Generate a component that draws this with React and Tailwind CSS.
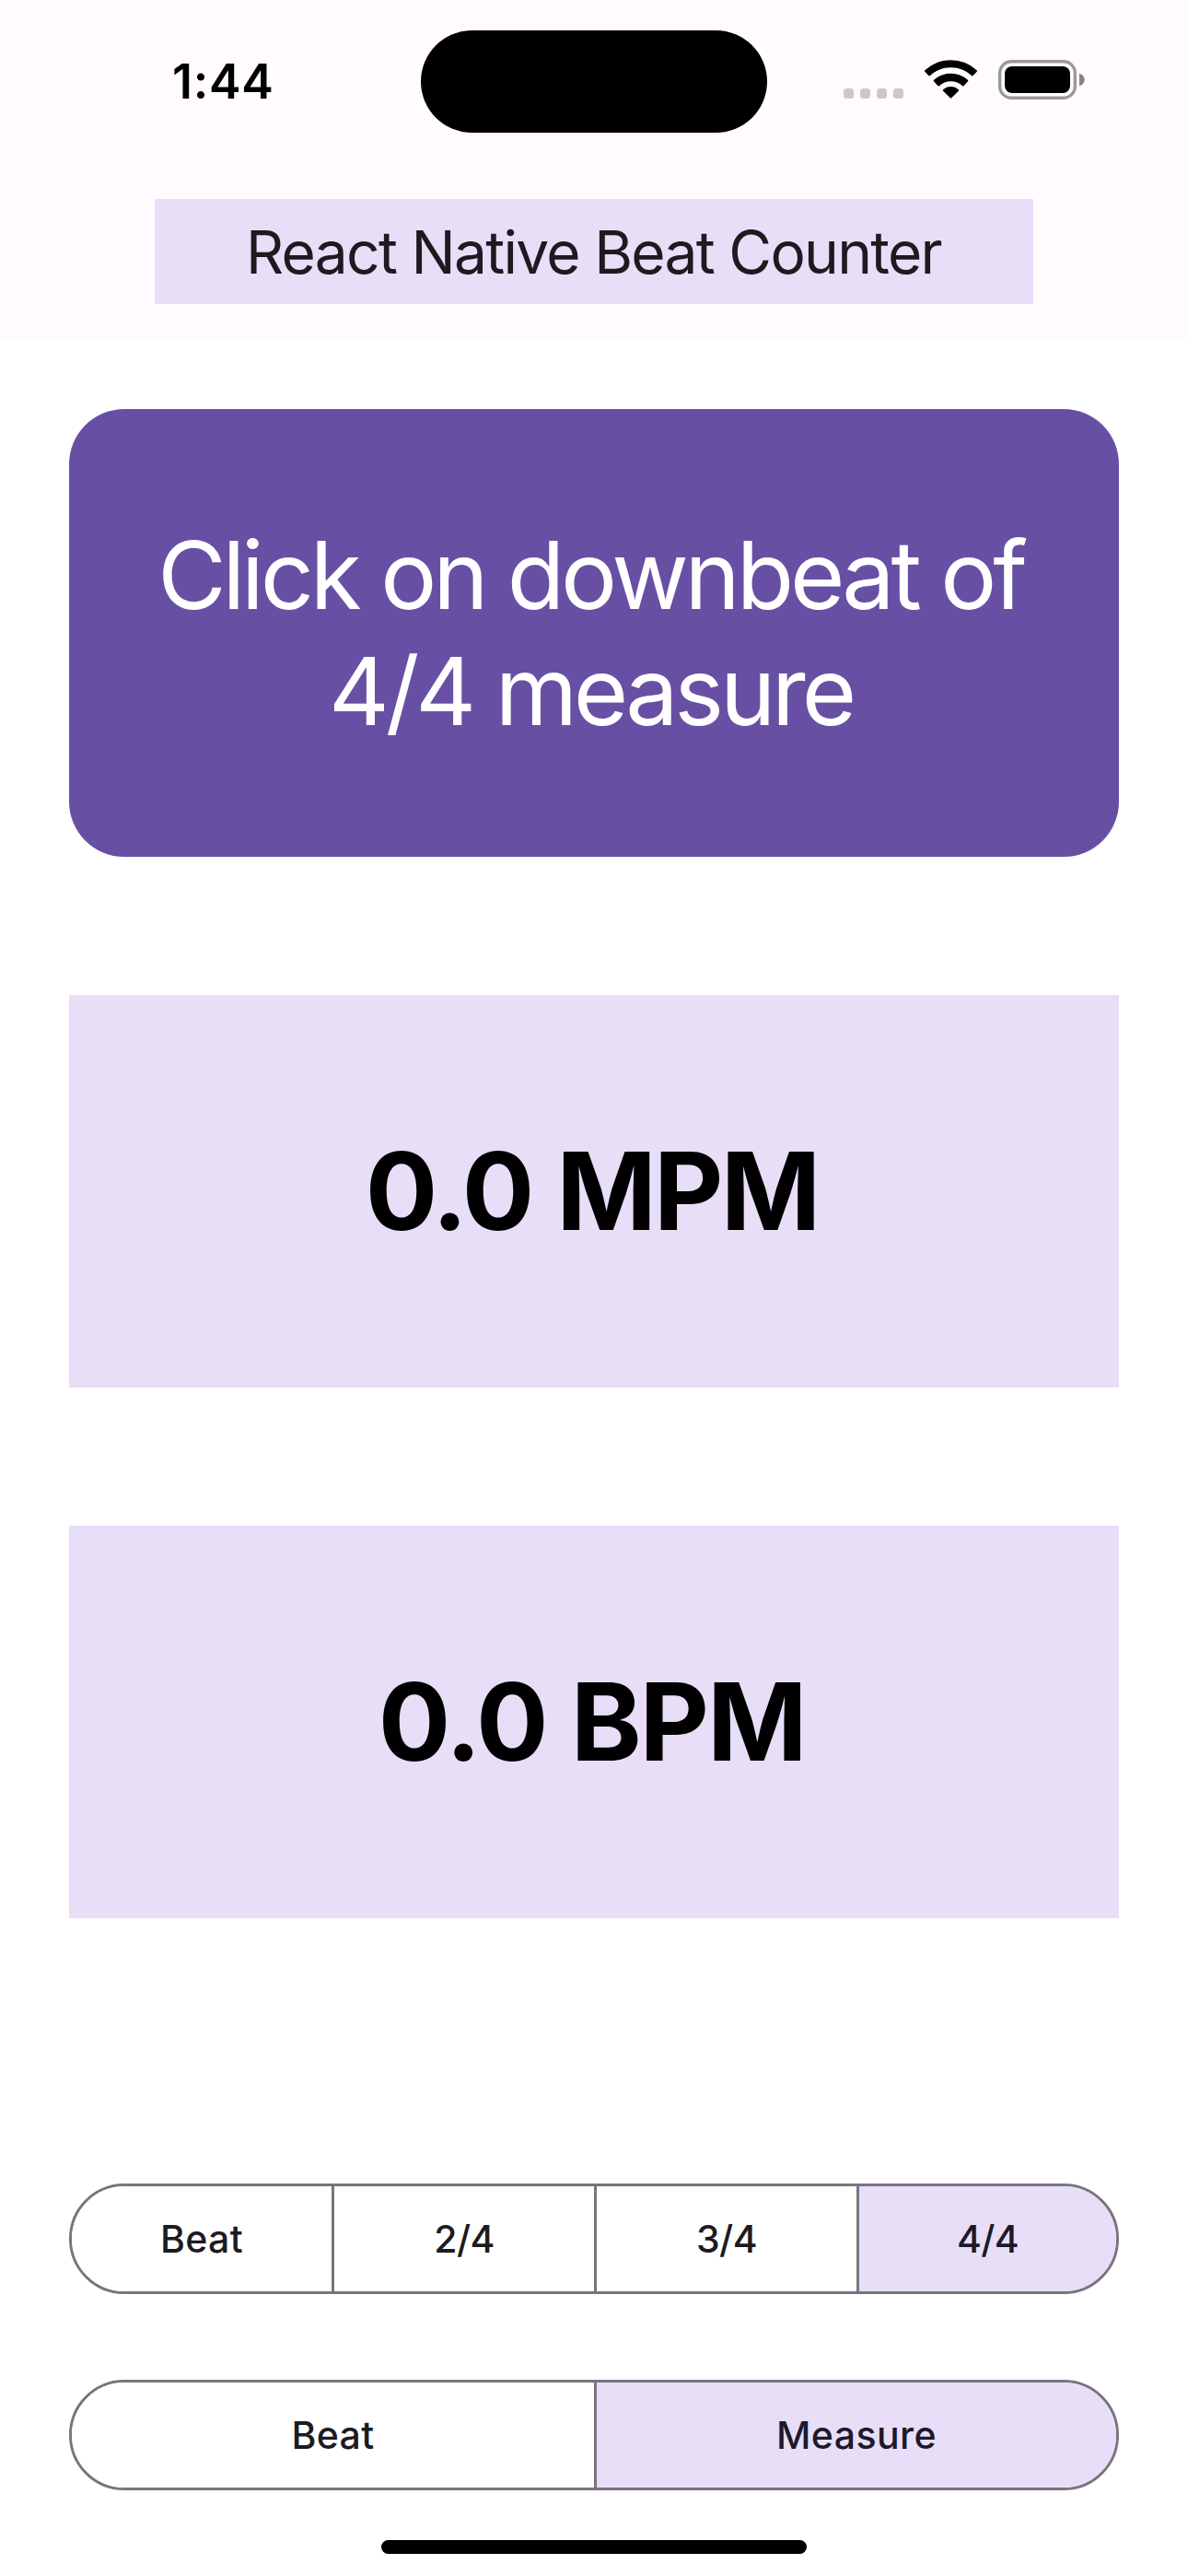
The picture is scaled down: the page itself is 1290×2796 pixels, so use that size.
function StatusBar() {
  return (
    <div className="grid h-[177px] grid-cols-[457px_376px_1fr] items-start text-black">
      <div className="pt-[57px] pl-[187px] text-[52px] leading-[63px] font-semibold tracking-[0.7px]">
        1:44
      </div>
      <div className="mt-[33.33px] h-[110.67px] rounded-full bg-black" />
      <div className="flex items-start pt-[65px] pl-[83px]">
        <div className="mt-[31px] flex gap-[7px]">
          {[0, 1, 2, 3].map((dot) => (
            <span key={dot} className="size-[11px] rounded-[3.5px] bg-[#cac8ca]" />
          ))}
        </div>
        <svg
          className="ml-[23px] h-[42px] w-[57px]"
          viewBox="0 0 171 126"
          fill="currentColor"
          stroke="currentColor"
          strokeWidth="6"
          strokeLinejoin="round"
        >
          <path d="M3 36.1A122 122 0 0 1 168 36.1L155.8 49.3A104 104 0 0 0 15.2 49.3Z" />
          <path d="M32.2 67.7A79 79 0 0 1 138.8 67.7L125.3 82.5A59 59 0 0 0 45.7 82.5Z" />
          <path d="M85.5 122L62.5 99A33 33 0 0 1 108.5 99Z" />
        </svg>
        <svg className="ml-[23px] h-[43px] w-[94px]" viewBox="0 0 94 43">
          <rect x="1.7" y="1.7" width="81.6" height="39.6" rx="12.5" fill="white" stroke="#9a989a" strokeWidth="3.4" />
          <rect x="7" y="7" width="71" height="29" rx="8" fill="black" />
          <path d="M88 14.7C91.500 15.800 93.700 18.500 93.700 21.500C93.700 24.500 91.500 27.200 88 28.300Z" fill="#858385" />
        </svg>
      </div>
    </div>
  );
}

function Readout({ value }) {
  return (
    <div className="h-[426px] bg-[#e8def8] pt-[142px] pr-[5px] text-center text-[116.5px] leading-[141px] font-bold text-black">
      {value}
    </div>
  );
}

function Segment({ children, selected, first, numeric }) {
  return (
    <button
      className={[
        "border-[#79747e] text-center text-[41px] leading-[50px] font-medium",
        first ? "" : "border-l-[3px]",
        selected ? "bg-[#e8def8] text-[#1d192b]" : "bg-white text-[#1c1b1f]",
        numeric ? "tracking-[-0.6px]" : "tracking-[0.4px]",
      ].join(" ")}
    >
      {children}
    </button>
  );
}

export default function App() {
  return (
    <div className="flex h-[2796px] w-[1290px] flex-col overflow-hidden bg-white font-['Inter',sans-serif]">
      <header className="h-[369px] bg-[#fffbff]">
        <StatusBar />
        <h1 className="mx-[168px] mt-[39px] h-[114px] bg-[#e8def8] pr-[1px] text-center text-[64px] leading-[115px] tracking-[-1.7px] whitespace-nowrap text-[#1c1b1f]">
          React Native Beat Counter
        </h1>
      </header>

      <main className="flex flex-col px-[75px] pt-[75px]">
        <button className="h-[486px] rounded-[60px] bg-[#6750a4] pr-[7px] text-center text-[102px] leading-[126px] tracking-[-4.15px] whitespace-nowrap text-white">
          Click on downbeat of
          <br />
          4/4 measure
        </button>

        <div className="mt-[150px] flex flex-col gap-[150px]">
          <div className="tracking-[-2.8px] [word-spacing:2px]">
            <Readout value="0.0 MPM" />
          </div>
          <div className="tracking-[-2.2px] [word-spacing:1px]">
            <Readout value="0.0 BPM" />
          </div>
        </div>

        <div className="mt-[288px] grid h-[120px] grid-cols-[282px_285px_285px_282px] overflow-hidden rounded-[60px] border-[3px] border-[#79747e]">
          <Segment first>Beat</Segment>
          <Segment numeric>2/4</Segment>
          <Segment numeric>3/4</Segment>
          <Segment numeric selected>4/4</Segment>
        </div>

        <div className="mt-[93px] grid h-[120px] grid-cols-2 overflow-hidden rounded-[60px] border-[3px] border-[#79747e]">
          <Segment first>Beat</Segment>
          <Segment selected>Measure</Segment>
        </div>
      </main>

      <div className="mx-auto mt-[54px] h-[15px] w-[462px] rounded-full bg-black" />
    </div>
  );
}
